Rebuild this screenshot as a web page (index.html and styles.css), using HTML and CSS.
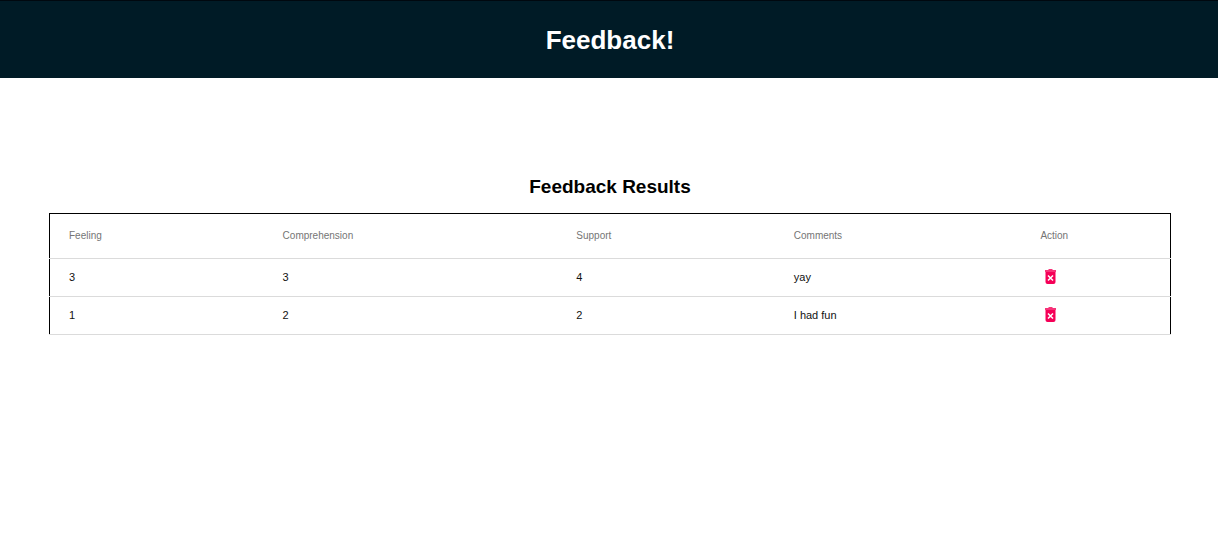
FILE: index.html
```html
<!DOCTYPE html>
<html lang="en">
<head>
<meta charset="utf-8">
<meta name="viewport" content="width=device-width, initial-scale=1">
<title>Feedback!</title>
<link rel="stylesheet" href="styles.css">
</head>
<body>
<header class="app-header">
  <h1 class="app-title">Feedback!</h1>
</header>
<main class="results">
  <h2 class="results-title" id="results-title">Feedback Results</h2>
  <table class="results-table" aria-labelledby="results-title">
    <colgroup>
      <col class="col-feeling">
      <col class="col-comprehension">
      <col class="col-support">
      <col class="col-comments">
      <col class="col-action">
    </colgroup>
    <thead>
      <tr>
        <th scope="col">Feeling</th>
        <th scope="col">Comprehension</th>
        <th scope="col">Support</th>
        <th scope="col">Comments</th>
        <th scope="col">Action</th>
      </tr>
    </thead>
    <tbody>
      <tr>
        <td>3</td>
        <td>3</td>
        <td>4</td>
        <td>yay</td>
        <td><button class="delete" type="button" aria-label="Delete feedback"><svg class="delete-icon" viewBox="0 0 19 19" aria-hidden="true"><path class="lid" d="M5 3h3l1-1h3l1 1h3v2H5z"/><path d="M5.500 5h10v10q0 2-2 2h-6q-2 0-2-2z"/><path class="cross" d="M8 8.500l5 5m0-5l-5 5"/></svg></button></td>
      </tr>
      <tr>
        <td>1</td>
        <td>2</td>
        <td>2</td>
        <td>I had fun</td>
        <td><button class="delete" type="button" aria-label="Delete feedback"><svg class="delete-icon" viewBox="0 0 19 19" aria-hidden="true"><path class="lid" d="M5 3h3l1-1h3l1 1h3v2H5z"/><path d="M5.500 5h10v10q0 2-2 2h-6q-2 0-2-2z"/><path class="cross" d="M8 8.500l5 5m0-5l-5 5"/></svg></button></td>
      </tr>
    </tbody>
  </table>
</main>
</body>
</html>
```
FILE: styles.css
```css
* {
  box-sizing: border-box;
}

body {
  margin: 0;
  background: #fff;
  color: #000;
  font-family: "Liberation Sans", Arial, sans-serif;
}

.app-header {
  padding: 24px 0 23px 2px;
  border-top: 1px solid #00080f;
  background: #001b26;
  color: #fff;
  text-align: center;
}

.app-title {
  margin: 0;
  font-size: 26px;
  line-height: 30px;
}

.results {
  padding: 97px 47px 48px 49px;
}

.results-title {
  margin: 0 0 14px;
  font-size: 19px;
  line-height: 24px;
  text-align: center;
}

.results-table {
  width: 100%;
  table-layout: fixed;
  border: 1px solid #000;
  border-collapse: collapse;
  text-align: left;
}

.col-feeling {
  width: 19.1%;
}

.col-comprehension {
  width: 26.2%;
}

.col-support {
  width: 19.4%;
}

.col-comments {
  width: 22%;
}

.results-table th,
.results-table td {
  padding: 0 19px 2px;
  border-bottom: 1px solid #dbdbdb;
}

.results-table th {
  height: 45px;
  color: #757575;
  font-size: 10px;
  font-weight: 400;
}

.results-table td {
  height: 38px;
  color: #111;
  font-size: 11px;
}

.delete {
  display: block;
  padding: 0;
  border: 0;
  background: none;
  color: #f50057;
  cursor: pointer;
}

.delete-icon {
  display: block;
  width: 19px;
  height: 19px;
  fill: currentColor;
}

.lid {
  opacity: 0.8;
}

.cross {
  fill: none;
  stroke: #fff;
  stroke-width: 1.5;
}
```
